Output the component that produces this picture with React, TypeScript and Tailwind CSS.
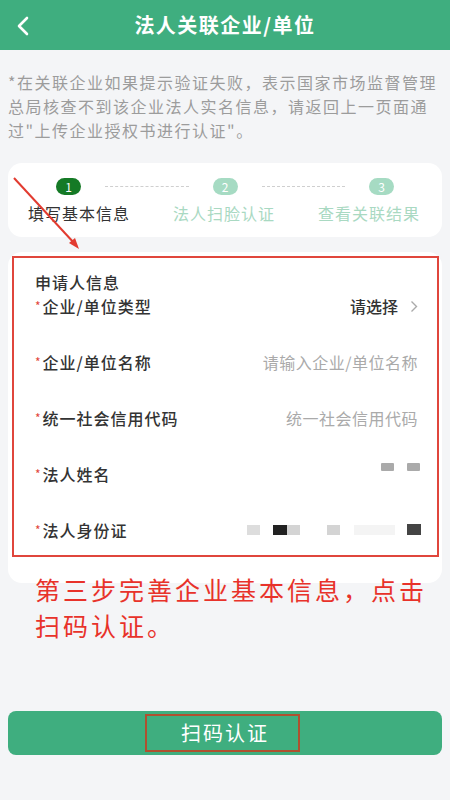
import React from 'react';

const rows = [
  { label: '企业/单位类型', kind: 'select' },
  { label: '企业/单位名称', kind: 'input', placeholder: '请输入企业/单位名称' },
  { label: '统一社会信用代码', kind: 'input', placeholder: '统一社会信用代码' },
  { label: '法人姓名', kind: 'name' },
  { label: '法人身份证', kind: 'id' },
];

const steps = ['填写基本信息', '法人扫脸认证', '查看关联结果'];

const RowValue: React.FC<{ kind: string; placeholder?: string }> = ({ kind, placeholder }) => {
  if (kind === 'select') {
    return (
      <div className="flex items-center gap-[12px]">
        <span className="text-[#333] font-medium">请选择</span>
        <svg width="8" height="13" viewBox="0 0 8 13" fill="none">
          <path d="M1.5 1.5L6.5 6.5L1.5 11.5" stroke="#aaa" strokeWidth="1.4" />
        </svg>
      </div>
    );
  }
  if (kind === 'name') {
    return (
      <div className="flex items-center gap-[13px] pt-[1px]">
        <span className="w-[13px] h-[8px] bg-[#aaa] rounded-[1px]" />
        <span className="w-[13px] h-[8px] bg-[#aaa] rounded-[1px] mr-[-2px]" />
      </div>
    );
  }
  if (kind === 'id') {
    return (
      <div className="flex items-center pt-[6px] mr-[-3px]">
        <span className="w-[13px] h-[10px] bg-[#ddd]" />
        <span className="w-[14px] h-[10px] bg-[#222] ml-[13px]" />
        <span className="w-[13px] h-[10px] bg-[#d4d4d4]" />
        <span className="w-[13px] h-[10px] bg-[#d4d4d4] ml-[27px]" />
        <span className="w-[41px] h-[10px] bg-[#f4f4f4] ml-[14px]" />
        <span className="w-[14px] h-[11px] bg-[#444] ml-[12px]" />
      </div>
    );
  }
  return <span className="text-[#aaa] tracking-[0.5px]">{placeholder}</span>;
};

export default function App() {
  return (
    <div className="relative w-[450px] h-[800px] overflow-hidden bg-[#f4f5f7] font-['Noto_Sans_CJK_SC',sans-serif]">
      <div className="relative h-[50px] bg-[#3fae7f] flex items-center justify-center">
        <svg className="absolute left-[16px] top-[16px]" width="14" height="20" viewBox="0 0 14 20" fill="none">
          <path d="M11 2L3 10L11 18" stroke="#fff" strokeWidth="2.6" strokeLinecap="round" strokeLinejoin="round" />
        </svg>
        <span className="text-white text-[20px] font-semibold tracking-[1.5px]">法人关联企业/单位</span>
      </div>

      <div className="px-2 pt-[20px] text-[#9c9c9c] text-[16px] leading-[24px] tracking-[1.5px]">
        <div>*在关联企业如果提示验证失败，表示国家市场监督管理</div>
        <div>总局核查不到该企业法人实名信息，请返回上一页面通</div>
        <div>过"上传企业授权书进行认证"。</div>
      </div>

      <div className="mx-2 mt-[21px] h-[74px] bg-white rounded-[14px] pt-[15px]">
        <div className="flex items-center px-[48px]">
          <span className="w-[25px] h-[17px] rounded-full bg-[#157a26] text-white text-[12px] leading-[17px] text-center">1</span>
          <span className="flex-1 mx-[24px] border-t border-dashed border-[#cfcfcf]" />
          <span className="w-[25px] h-[17px] rounded-full bg-[#a6dbc3] text-white text-[12px] leading-[17px] text-center">2</span>
          <span className="flex-1 mx-[24px] border-t border-dashed border-[#cfcfcf]" />
          <span className="w-[25px] h-[17px] rounded-full bg-[#a6dbc3] text-white text-[12px] leading-[17px] text-center">3</span>
        </div>
        <div className="flex justify-between pl-[20px] pr-[22px] mt-[6px] text-[16px] leading-[24px] tracking-[1px]">
          {steps.map((s, i) => (
            <span key={s} className={i === 0 ? 'text-[#333]' : 'text-[#a9d9c2]'}>
              {s}
            </span>
          ))}
        </div>
      </div>

      <div className="relative mx-2 mt-[15px] bg-white rounded-[14px] pl-[27px] pr-[24px] pt-[18px] pb-[9px] text-[16px] leading-[24px]">
        <div className="text-[#333] font-medium tracking-[1px]">申请人信息</div>
        {rows.map((r) => (
          <div key={r.label} className="h-[56px] flex items-start justify-between">
            <div className="flex items-center text-[#333] tracking-[1px]">
              <span className="text-[#e2463a] text-[12px] mr-[1px]">*</span>
              <span className="font-medium">{r.label}</span>
            </div>
            <RowValue kind={r.kind} placeholder={r.placeholder} />
          </div>
        ))}
        <div className="absolute left-[4px] right-[3px] top-[4px] bottom-[26px] border-2 border-[#e0463c] pointer-events-none" />
      </div>

      <div className="relative -mt-[12px] pl-[35px] text-[#e8322a] text-[25px] leading-[36px] tracking-[3px]">
        <div>第三步完善企业基本信息，点击</div>
        <div>扫码认证。</div>
      </div>

      <div className="relative mx-2 mt-[68px] h-[44px] rounded-[8px] bg-[#3fae7f] flex items-center justify-center">
        <span className="text-white text-[20px] tracking-[2px]">扫码认证</span>
        <div className="absolute left-[137px] top-[3px] w-[155px] h-[38px] border-2 border-[#b0502f]" />
      </div>

      <svg className="absolute left-0 top-0 pointer-events-none" width="450" height="800" viewBox="0 0 450 800">
        <line x1="14" y1="178" x2="75" y2="244" stroke="#e23b30" strokeWidth="2" />
        <path d="M79 249L69 243L75 238Z" fill="#e23b30" />
      </svg>
    </div>
  );
}
